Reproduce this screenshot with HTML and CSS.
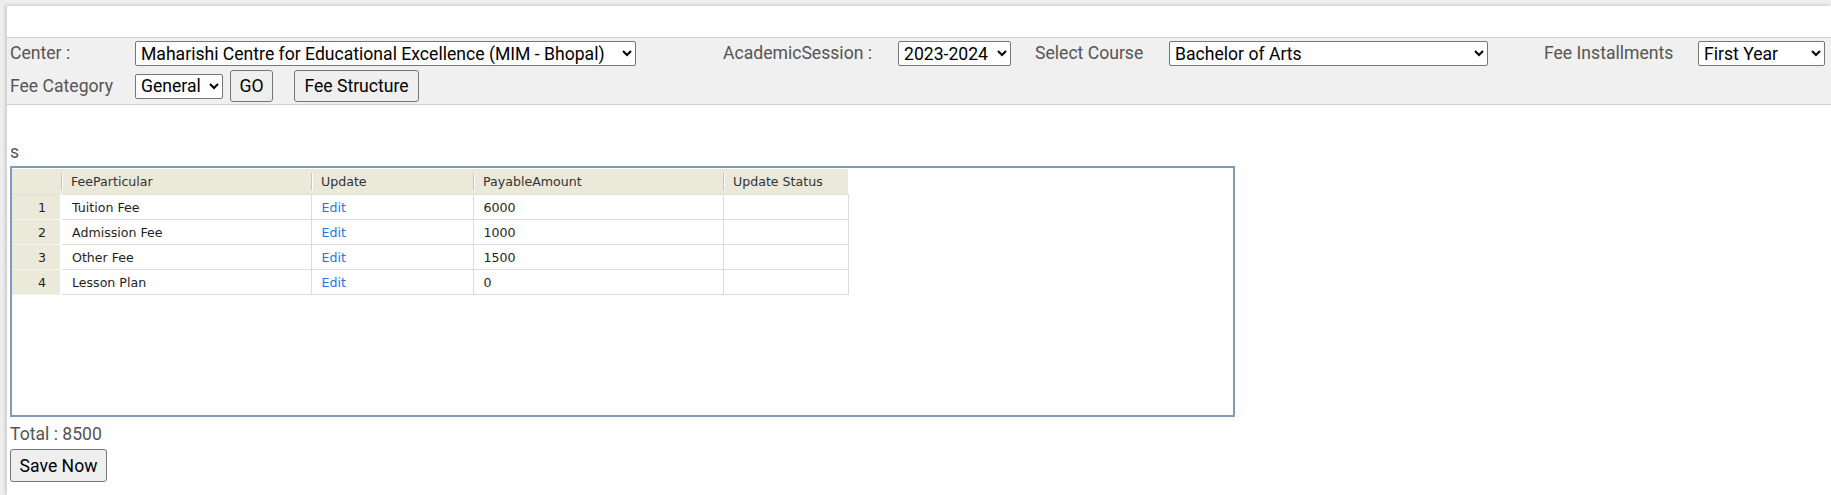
FILE: index.html
```html
<!DOCTYPE html>
<html lang="en">
<head>
<meta charset="utf-8">
<title>Fee Structure</title>
<link rel="stylesheet" href="styles.css">
</head>
<body>
<div class="page">
  <div class="top-gap"></div>
  <div class="filters">
    <label class="lbl">Center :</label>
    <div class="ctl"><select class="sel sel-center"><option>Maharishi Centre for Educational Excellence (MIM - Bhopal)</option></select></div>
    <label class="lbl">AcademicSession :</label>
    <div class="ctl"><select class="sel sel-session"><option>2023-2024</option></select></div>
    <label class="lbl">Select Course</label>
    <div class="ctl"><select class="sel sel-course"><option>Bachelor of Arts</option></select></div>
    <label class="lbl">Fee Installments</label>
    <div class="ctl"><select class="sel sel-inst"><option>First Year</option></select></div>
    <label class="lbl">Fee Category</label>
    <div class="actions">
      <select class="sel sel-cat"><option>General</option></select>
      <button class="btn btn-go">GO</button>
      <button class="btn btn-fs">Fee Structure</button>
    </div>
  </div>
  <div class="note">s</div>
  <div class="gridbox">
    <table class="grid">
      <colgroup>
        <col class="c-num"><col class="c-part"><col class="c-upd"><col class="c-amt"><col class="c-stat">
      </colgroup>
      <thead>
        <tr><th class="hnum"></th><th>FeeParticular</th><th>Update</th><th>PayableAmount</th><th>Update Status</th></tr>
      </thead>
      <tbody>
        <tr><td class="num">1</td><td>Tuition Fee</td><td><a class="edit" href="#">Edit</a></td><td>6000</td><td></td></tr>
        <tr><td class="num">2</td><td>Admission Fee</td><td><a class="edit" href="#">Edit</a></td><td>1000</td><td></td></tr>
        <tr><td class="num">3</td><td>Other Fee</td><td><a class="edit" href="#">Edit</a></td><td>1500</td><td></td></tr>
        <tr><td class="num">4</td><td>Lesson Plan</td><td><a class="edit" href="#">Edit</a></td><td>0</td><td></td></tr>
      </tbody>
    </table>
  </div>
  <div class="total">Total : 8500</div>
  <button class="btn btn-save">Save Now</button>
</div>
</body>
</html>
```
FILE: styles.css
```css
html, body {
  margin: 0;
  padding: 0;
}
body {
  background: #eeeeee;
  font-family: Roboto, "Liberation Sans", sans-serif;
  overflow: hidden;
}
.page {
  margin: 6px 0 0 7px;
  background: #ffffff;
  min-height: 489px;
  box-shadow: -2px -1px 3px rgba(0, 0, 0, 0.14);
}
.top-gap {
  height: 31px;
}
.filters {
  display: grid;
  grid-template-columns: 125px 588px 175px 137px 134px 375px 154px 1fr;
  grid-template-rows: 25px 32px;
  row-gap: 4px;
  align-items: center;
  background: #f0f0f0;
  border-top: 1px solid #cfcfcf;
  border-bottom: 1px solid #cfcfcf;
  padding: 3px 3px 2px 3px;
}
.lbl {
  font-size: 17.6px;
  color: #555555;
  line-height: 21px;
}
.ctl {
  display: flex;
  align-items: center;
}
.sel {
  font-family: Roboto, "Liberation Sans", sans-serif;
  font-size: 17.6px;
  color: #000000;
  height: 25px;
  background: #ffffff;
  border: 1px solid #767676;
  border-radius: 2px;
  padding: 0 0 0 1px;
  margin: 0;
}
.sel-center { width: 501px; }
.sel-session { width: 113px; }
.sel-course { width: 319px; }
.sel-inst { width: 127px; }
.sel-cat { width: 88px; }
.actions {
  grid-column: 2 / -1;
  display: flex;
  align-items: center;
}
.btn {
  font-family: Roboto, "Liberation Sans", sans-serif;
  font-size: 17.6px;
  color: #000000;
  background: #efefef;
  border: 1px solid #767676;
  border-radius: 3px;
  padding: 0 9px;
  height: 32px;
  margin: 0;
}
.btn-go {
  margin-left: 7px;
  width: 43px;
  padding: 0;
}
.btn-fs {
  margin-left: 21px;
  width: 125px;
  padding: 0;
}
.note {
  margin: 37px 0 0 3px;
  font-size: 17.6px;
  line-height: 20px;
  color: #555555;
  height: 20px;
}
.gridbox {
  margin: 4px 0 0 3px;
  width: 1225px;
  height: 251px;
  box-sizing: border-box;
  border: 2px solid #7d9cb8;
  padding-top: 1px;
  background: #ffffff;
}
.grid {
  border-collapse: collapse;
  table-layout: fixed;
  width: 836px;
  font-family: "DejaVu Sans", Tahoma, sans-serif;
  font-size: 12.6px;
  color: #1e1e1e;
}
.c-num { width: 49px; }
.c-part { width: 250px; }
.c-upd { width: 162px; }
.c-amt { width: 250px; }
.c-stat { width: 125px; }
.grid th {
  height: 25px;
  padding: 0 10px;
  text-align: left;
  font-weight: normal;
  color: #333333;
  background: linear-gradient(90deg, #c9c6b6 0, #c9c6b6 1px, #ffffff 1px, #ffffff 2px, transparent 2px) left center / 2px 17px no-repeat, #ebe9d9;
  border-bottom: 1px solid #e2e0d4;
}
.grid th.hnum {
  background: #ebe9d9;
}
.grid td {
  height: 24px;
  padding: 0 10px;
  border-right: 1px solid #dcdcdc;
  border-bottom: 1px solid #dcdcdc;
  white-space: nowrap;
}
.grid td.num {
  background: #ebe9d9;
  text-align: right;
  padding-right: 14px;
  border-bottom: 1px solid #f4f3ec;
  border-right: 2px solid #ffffff;
}
.edit {
  color: #2276e8;
  text-decoration: none;
}
.total {
  margin: 7px 0 0 3px;
  font-size: 17.6px;
  line-height: 20px;
  color: #555555;
}
.btn-save {
  margin: 5px 0 0 3px;
  width: 97px;
  height: 33px;
  padding: 0;
  display: block;
}
```
